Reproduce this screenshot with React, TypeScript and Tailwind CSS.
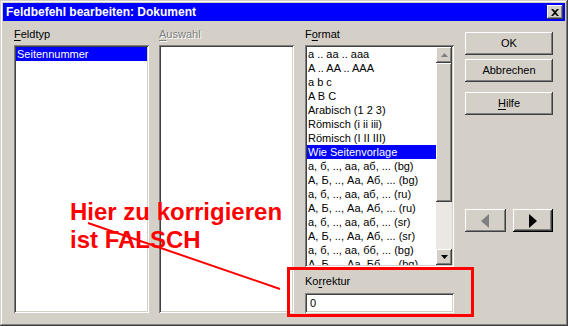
import React from 'react';

const raised =
  'shadow-[inset_-1px_-1px_#404040,inset_1px_1px_#ffffff,inset_-2px_-2px_#808080,inset_2px_2px_#d4d0c8]';
const sunken =
  'shadow-[inset_1px_1px_#808080,inset_-1px_-1px_#ffffff,inset_2px_2px_#404040,inset_-2px_-2px_#d4d0c8]';

const formats = [
  'a .. aa .. aaa',
  'A .. AA .. AAA',
  'a b c',
  'A B C',
  'Arabisch (1 2 3)',
  'Römisch (i ii iii)',
  'Römisch (I II III)',
  'Wie Seitenvorlage',
  'а, б, .., аа, аб, ... (bg)',
  'А, Б, .., Аа, Аб, ... (bg)',
  'а, б, .., аа, аб, ... (ru)',
  'А, Б, .., Аа, Аб, ... (ru)',
  'а, б, .., аа, аб, ... (sr)',
  'А, Б, .., Аа, Аб, ... (sr)',
  'а, б, .., аа, бб, ... (bg)',
  'А, Б, .., Аа, Бб, ... (bg)',
];

const Label: React.FC<{ pre?: string; u: string; post: string; disabled?: boolean }> = ({ pre, u, post, disabled }) => (
  <div
    className={`mb-[4px] h-[14px] whitespace-nowrap leading-[14px] ${
      disabled ? 'text-[#808080] [text-shadow:1px_1px_0_#ffffff]' : 'text-black'
    }`}
  >
    {pre}
    <span className="underline underline-offset-[2px]">{u}</span>
    {post}
  </div>
);

const PushButton: React.FC<{ children: React.ReactNode; className?: string }> = ({ children, className }) => (
  <button
    className={`flex h-[23px] w-[88px] items-center justify-center bg-[#d4d0c8] text-[11px] text-black ${raised} ${className ?? ''}`}
  >
    {children}
  </button>
);

export default function App() {
  return (
    <div
      className="relative flex h-[326px] w-[568px] flex-col bg-[#d4d0c8] p-[3px] text-[11px] shadow-[inset_-1px_-1px_#404040,inset_1px_1px_#d4d0c8,inset_-2px_-2px_#808080,inset_2px_2px_#ffffff]"
      style={{ fontFamily: '"Liberation Sans", Arial, sans-serif' }}
    >
      {/* Title bar */}
      <div className="flex h-[18px] shrink-0 items-center justify-between bg-[#0000ff] pl-[3px] pr-[2px]">
        <span className="text-[12px] font-bold leading-none text-white">Feldbefehl bearbeiten: Dokument</span>
        <button className={`flex h-[14px] w-[16px] items-center justify-center bg-[#d4d0c8] ${raised}`}>
          <svg width="8" height="7" viewBox="0 0 8 7">
            <path d="M0 0h2l2 2 2-2h2L5 3.5 8 7H6L4 5 2 7H0l3-3.5z" fill="#000" />
          </svg>
        </button>
      </div>

      {/* Body */}
      <div className="flex flex-1 items-start pl-[11px] pt-[6px]">
        {/* Feldtyp */}
        <div className="flex w-[135px] flex-col">
          <Label u="F" post="eldtyp" />
          <div className={`h-[268px] bg-white p-[2px] ${sunken}`}>
            <div className="h-[14px] bg-[#0000ff] pl-[1px] leading-[14px] text-white">Seitennummer</div>
          </div>
        </div>

        {/* Auswahl */}
        <div className="ml-[10px] flex w-[135px] flex-col">
          <Label u="A" post="uswahl" disabled />
          <div className={`h-[268px] bg-white p-[2px] ${sunken}`} />
        </div>

        {/* Format */}
        <div className="ml-[11px] flex w-[149px] flex-col">
          <Label pre="F" u="o" post="rmat" />
          <div className={`flex h-[222px] bg-white p-[2px] ${sunken}`}>
            <div className="flex-1 overflow-hidden">
              {formats.map((f, i) => (
                <div
                  key={i}
                  className={`h-[14px] whitespace-nowrap pl-[1px] leading-[14px] ${
                    i === 7 ? 'bg-[#0000ff] text-white' : 'text-black'
                  }`}
                >
                  {f}
                </div>
              ))}
            </div>
            <div className="flex w-[16px] flex-col">
              <div className={`flex h-[16px] items-center justify-center bg-[#d4d0c8] ${raised}`}>
                <svg width="7" height="4" viewBox="0 0 7 4">
                  <path d="M3.5 0L7 4H0z" fill="#808080" />
                </svg>
              </div>
              <div className={`h-[139px] bg-[#d4d0c8] ${raised}`} />
              <div className="flex-1 bg-[#ebe8e4]" />
              <div className={`flex h-[16px] items-center justify-center bg-[#d4d0c8] ${raised}`}>
                <svg width="7" height="4" viewBox="0 0 7 4">
                  <path d="M0 0h7L3.5 4z" fill="#000" />
                </svg>
              </div>
            </div>
          </div>
          <div className="mt-[7px]">
            <Label pre="Ko" u="r" post="rektur" />
          </div>
          <div className={`mt-[1px] flex h-[20px] items-center bg-white pl-[5px] ${sunken}`}>0</div>
        </div>

        {/* Buttons */}
        <div className="ml-[11px] mt-[5px] flex w-[88px] flex-col">
          <PushButton>OK</PushButton>
          <PushButton className="mt-[4px]">Abbrechen</PushButton>
          <PushButton className="mt-[10px]">
            <span className="underline underline-offset-[2px]">H</span>ilfe
          </PushButton>
          <div className="mt-[94px] flex gap-[7px]">
            <button className={`flex h-[23px] w-[41px] items-center justify-center bg-[#d4d0c8] ${raised}`}>
              <svg width="8" height="14" viewBox="0 0 8 14">
                <path d="M8 0v14L0 7z" fill="#808080" />
              </svg>
            </button>
            <button
              className="flex h-[23px] w-[41px] items-center justify-center bg-[#d4d0c8] shadow-[inset_-1px_-1px_#000000,inset_1px_1px_#ffffff,inset_-2px_-2px_#404040,inset_2px_2px_#d4d0c8,inset_-3px_-3px_#808080]"
            >
              <svg width="8" height="14" viewBox="0 0 8 14">
                <path d="M0 0v14L8 7z" fill="#000" />
              </svg>
            </button>
          </div>
        </div>
      </div>

      {/* Annotation overlay */}
      <div className="pointer-events-none absolute left-[287px] top-[267px] h-[50px] w-[187px] border-[3px] border-[#ff0000]" />
      <div className="pointer-events-none absolute left-[70px] top-[198px] text-[24px] font-bold leading-[28px] text-[#ff0000]">
        <div>Hier zu korrigieren</div>
        <div>ist FALSCH</div>
      </div>
      <svg className="pointer-events-none absolute left-0 top-0" width="568" height="326">
        <line x1="88" y1="223" x2="280" y2="289" stroke="#ff0000" strokeWidth="2" />
      </svg>
    </div>
  );
}
